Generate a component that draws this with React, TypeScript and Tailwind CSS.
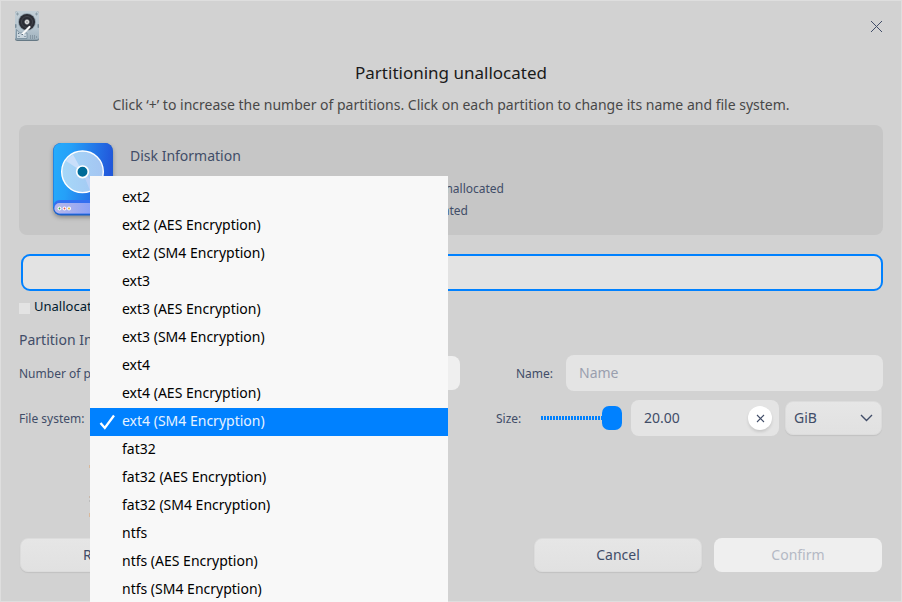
import type { ReactNode } from "react";

const fileSystems = ["ext2", "ext3", "ext4", "fat32", "ntfs"];
const options = fileSystems.flatMap((n) => [n, `${n} (AES Encryption)`, `${n} (SM4 Encryption)`]);
const selected = "ext4 (SM4 Encryption)";

function AppIcon() {
  return (
    <svg width="26" height="32" viewBox="0 0 26 32">
      <defs>
        <linearGradient id="case" x1="0" y1="0" x2="0" y2="1">
          <stop offset="0" stopColor="#c3cfd6" />
          <stop offset="0.6" stopColor="#b6c5cf" />
          <stop offset="1" stopColor="#9fb1bd" />
        </linearGradient>
      </defs>
      <rect x="1" y="1" width="24" height="30" rx="2.5" fill="#667985" />
      <rect x="1" y="1" width="24" height="28.8" rx="2.5" fill="url(#case)" />
      <path d="M3.5 2.5v3M2 4h3M22.500 2.500v3M21 4h3" stroke="#8797a2" strokeWidth=".8" />
      <rect x="1" y="14" width="1.5" height="4" rx=".7" fill="#7b8e9b" />
      <rect x="23.500" y="14" width="1.5" height="4" rx=".7" fill="#7b8e9b" />
      <circle cx="13" cy="12" r="9" fill="#93a3ae" />
      <circle cx="13" cy="12" r="8.100" fill="#2b2d34" />
      <circle cx="13" cy="12" r="5.500" fill="none" stroke="#42454c" strokeWidth="1" />
      <circle cx="13" cy="12" r="2.400" fill="#ececec" stroke="#777b80" strokeWidth=".6" />
      <circle cx="13" cy="12" r=".9" fill="#999" />
      <path d="M2.500 19.500l3 3.500h7.500v5.500h-10.500z" fill="#cad6de" stroke="#758b9a" strokeWidth=".8" />
      <path d="M15.500 17L8.500 24" stroke="#fafafa" strokeWidth="2.200" strokeLinecap="round" />
      <path d="M4.500 23v1M4.500 26.500h1M10.500 26.500h1M7.500 24.500h1.500" stroke="#5c7182" strokeWidth="1.100" />
      <path d="M16.500 25v4M18.500 25v4M20.500 25v4M22.500 26v2" stroke="#8394a0" strokeWidth=".9" />
    </svg>
  );
}

function DiskIcon() {
  return (
    <svg width="66" height="80" viewBox="0 0 66 80" className="overflow-visible">
      <defs>
        <linearGradient id="body" x1="0" y1="0" x2="1" y2="0.15">
          <stop offset="0" stopColor="#25adfc" />
          <stop offset="0.3" stopColor="#25a0f8" />
          <stop offset="1" stopColor="#2257db" />
        </linearGradient>
        <linearGradient id="disc" x1="0" y1="0" x2="1" y2="0">
          <stop offset="0" stopColor="#a6d8f8" />
          <stop offset="1" stopColor="#a4c5f2" />
        </linearGradient>
        <linearGradient id="tray" x1="0" y1="0" x2="1" y2="0">
          <stop offset="0" stopColor="#b9b8e8" />
          <stop offset="1" stopColor="#7296ff" />
        </linearGradient>
      </defs>
      <rect x="3" y="3" width="60" height="72.500" rx="8" fill="#1d62cc" className="drop-shadow-[0_2px_2px_rgba(0,0,0,0.3)]" />
      <rect x="3.500" y="3" width="59" height="71" rx="8" fill="url(#body)" />
      <path d="M4 64q1-4 7-4h52v6q0 8-7 8H11q-7 0-7-8z" fill="#346ff0" />
      <rect x="4.500" y="63" width="57" height="10.500" rx="5" fill="url(#tray)" />
      <circle cx="32.500" cy="31.800" r="20.800" fill="url(#disc)" stroke="#fff" strokeWidth="1.400" />
      <path d="M32.500 31.800L16 21A20 20 0 0 1 23 14.500z" fill="#c9dffa" />
      <path d="M32.500 31.800L40 50.500A20 20 0 0 0 47 46z" fill="#bcd2f7" />
      <circle cx="32.500" cy="31.800" r="5.800" fill="#006b98" stroke="#fff" strokeWidth="1.700" />
      <circle cx="9.500" cy="68.500" r="2" fill="#fff" /><circle cx="9.500" cy="68.500" r=".9" fill="#39a852" />
      <circle cx="14.500" cy="68.500" r="2" fill="#fff" /><circle cx="14.500" cy="68.500" r=".9" fill="#e44e55" />
      <circle cx="19" cy="68.500" r="2" fill="#fff" /><circle cx="19" cy="68.500" r=".9" fill="#dfb225" />
    </svg>
  );
}

function Button({ children, disabled = false }: { children: ReactNode; disabled?: boolean }) {
  return (
    <button
      disabled={disabled}
      className={
        disabled
          ? "h-[34px] w-[168px] rounded-lg bg-[#efefef] pb-[2px] text-[14px] text-[#b4b9c5]"
          : "h-[34px] w-[168px] rounded-lg border border-[#dcdcdc] bg-linear-to-b from-[#e6e6e6] to-[#e1e1e1] pb-[2px] text-[14px] text-[#414d68] shadow-[0_1px_1px_rgba(0,0,0,0.08)]"
      }
    >
      {children}
    </button>
  );
}

export default function App() {
  return (
    <div className="relative flex h-[602px] w-[902px] flex-col overflow-hidden bg-[#d2d2d2] px-[19px] pt-px font-['Noto_Sans',sans-serif] text-[12px] text-[#414d68] shadow-[inset_0_0_0_1px_#dedede]">
      <header className="-mx-[5px] flex h-[50px] shrink-0 justify-between pt-[9px]">
        <AppIcon />
        <svg className="mt-[10px] mr-[5px]" width="13" height="13" viewBox="0 0 13 13">
          <path d="M1 1l11 11M12 1L1 12" stroke="#414d68" strokeWidth="1" />
        </svg>
      </header>
      <h1 className="mt-[10px] shrink-0 text-center text-[17px] leading-[24px] text-[#1a1a1a]">Partitioning unallocated</h1>
      <p className="mt-[10px] shrink-0 text-center text-[14px] leading-[20px] text-[#484848]">
        Click ‘+’ to increase the number of partitions. Click on each partition to change its name and file system.
      </p>

      <section className="mt-[10px] flex h-[110px] w-[864px] shrink-0 rounded-lg bg-[#c6c6c6] pt-[15px] pl-[30.5px]">
        <DiskIcon />
        <div className="ml-[14.5px] w-[374px]">
          <h2 className="mt-[5px] text-[14px] leading-[22px]">Disk Information</h2>
          <p className="mt-[11px] text-right text-[12px] leading-[22px]">Unallocated</p>
          <p className="pr-[36px] text-right text-[12px] leading-[22px]">Unallocated</p>
        </div>
      </section>

      <div className="mt-[19px] ml-[2px] h-[37px] w-[862px] shrink-0 rounded-[9px] border-2 border-[#0081ff] bg-[#e3e3e3]" />

      <div className="mt-[5px] flex h-[22px] shrink-0 items-center gap-[4px] text-[13px] text-[#001a2e]">
        <span className="mt-[2px] size-[11px] bg-[#e3e3e3]" />
        <span>Unallocated</span>
      </div>
      <h2 className="mt-[11px] shrink-0 text-[14px] leading-[22px]">Partition Information</h2>

      <div className="mt-[4px] flex h-[36px] w-[864px] shrink-0 items-center">
        <span className="w-[130px] pt-[2px]">Number of partitions:</span>
        <div className="mb-px h-[34px] w-[311px] rounded-lg bg-[#efefef]" />
        <span className="ml-[56px] w-[50px] pt-[2px]">Name:</span>
        <input placeholder="Name" className="h-[36px] w-[317px] rounded-lg bg-[#e4e4e4] px-[13px] pb-[2px] text-[14px] placeholder:text-[#9a9fae]" />
      </div>
      <div className="mt-[9px] flex h-[36px] w-[864px] shrink-0 items-center">
        <span className="w-[477px] pt-[2px]">File system:</span>
        <span className="w-[45px] pt-[2px]">Size:</span>
        <div className="flex w-[81px] items-center">
          <div className="h-1 flex-1 bg-[repeating-linear-gradient(90deg,#0081ff_0_2px,transparent_2px_3px)]" />
          <span className="h-6 w-5 rounded-[7px] bg-[#0081ff]" />
        </div>
        <div className="ml-[9px] flex h-[36px] w-[148px] items-center justify-between rounded-lg bg-[#e4e4e4] pr-[7px] pl-[13px] text-[14px]">
          <span className="pb-[2px]">20.00</span>
          <span className="flex size-6 items-center justify-center rounded-full bg-white shadow-[0_2px_3px_rgba(0,0,0,0.12)]">
            <svg width="9" height="9" viewBox="0 0 9 9"><path d="M1 1l7 7M8 1L1 8" stroke="#414d68" strokeWidth="1.100" /></svg>
          </span>
        </div>
        <div className="ml-[6px] flex h-[34px] w-[97px] items-center justify-between rounded-lg border border-[#dcdcdc] bg-linear-to-b from-[#e6e6e6] to-[#e1e1e1] pr-[8px] pl-[8px] text-[14px] shadow-[0_1px_1px_rgba(0,0,0,0.08)]">
          <span className="pb-[2px]">GiB</span>
          <svg width="13" height="8" viewBox="0 0 13 8"><path d="M1 1l5.500 5.500L12 1" fill="none" stroke="#414d68" strokeWidth="1.400" /></svg>
        </div>
      </div>

      {/* Left edge of the hint that shows beside the open menu */}
      <div className="ml-[70px] flex h-[102px] w-px shrink-0 flex-col pt-[29px]">
        <i className="h-[3px] shrink-0 bg-[#d9b99c]" />
        <i className="mt-[28px] h-[2px] shrink-0 bg-[#c9b8ab]" />
        <i className="mt-[2px] h-[2px] shrink-0 bg-[#bdbdbd]" />
        <i className="mt-[11px] h-[4px] shrink-0 bg-[#d9b99c]" />
      </div>

      <footer className="ml-px flex w-[862px] shrink-0 gap-3">
        <div className="mr-auto"><Button>Revert</Button></div>
        <Button>Cancel</Button>
        <Button disabled>Confirm</Button>
      </footer>

      <ul className="absolute top-[176px] left-[90px] h-[426px] w-[358px] bg-[#f8f8f8] pt-[8px] text-[14px] text-black">
        {options.map((o) => (
          <li key={o} className={o === selected ? "flex h-7 items-center bg-[#0081ff] text-[#e6f2ff]" : "flex h-7 items-center"}>
            <span className="flex w-8 pl-[9px]">
              {o === selected && (
                <svg width="17" height="16" viewBox="0 0 17 16"><path d="M1.500 9l4.300 5L15 1.500" fill="none" stroke="#fff" strokeWidth="2.300" /></svg>
              )}
            </span>
            <span className="pb-[3px]">{o}</span>
          </li>
        ))}
      </ul>
    </div>
  );
}
